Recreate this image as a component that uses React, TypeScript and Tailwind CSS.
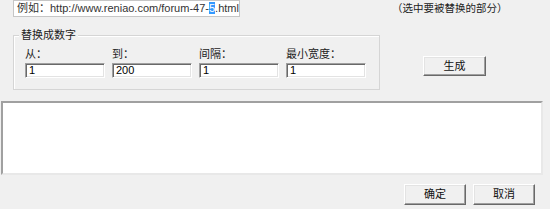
import React from 'react';

const font = "font-['Liberation_Sans','Noto_Sans_CJK_SC',sans-serif]";

const sunken =
  'border border-t-[#a0a0a0] border-l-[#a0a0a0] border-r-white border-b-white shadow-[inset_1px_1px_0_#696969,inset_-1px_-1px_0_#e3e3e3] bg-white';

const raised =
  'border border-t-white border-l-white border-r-[#696969] border-b-[#696969] shadow-[inset_-1px_-1px_0_#a0a0a0,inset_1px_1px_0_#e3e3e3] bg-[#f0f0f0]';

function Field({ label, value }: { label: string; value: string }) {
  return (
    <div className="flex flex-col w-[80px]">
      <span className="text-[11px] leading-[14px] text-[#222] h-[15px]">{label}</span>
      <div className={`${sunken} h-[15px] mt-[1px] pl-[3px] text-[11px] leading-[13px] text-black`}>
        {value}
      </div>
    </div>
  );
}

function Button({ label, className }: { label: string; className: string }) {
  return (
    <div
      className={`${raised} ${className} flex items-center justify-center text-[11px] text-[#111]`}
    >
      {label}
    </div>
  );
}

export default function App() {
  return (
    <div className={`w-[550px] h-[209px] bg-[#f0f0f0] ${font} overflow-hidden`}>
      {/* 示例地址 */}
      <div className="flex items-center h-[17px] pl-[13px]">
        <div className="w-[227px] h-[17px] border border-[#c6c6c6] bg-white pl-[3px] text-[11px] leading-[15px] text-[#333] whitespace-nowrap overflow-hidden">
          例如：http://www.reniao.com/forum-47-
          <span className="bg-[#3399ff] text-white">5</span>.html
        </div>
        <span className="ml-[152px] text-[10.5px] text-[#222]">（选中要被替换的部分）</span>
      </div>

      {/* 替换成数字 */}
      <div className="flex items-start mt-[18px]">
        <div className="relative ml-[13px] w-[367px] h-[55px] border border-[#d5d5d5] shadow-[inset_1px_1px_0_#fff]">
          <span className="absolute -top-[8px] left-[5px] px-[2px] bg-[#f0f0f0] text-[11px] leading-[14px] text-[#222]">
            替换成数字
          </span>
          <div className="flex gap-[7px] pl-[11px] pt-[11px]">
            <Field label="从：" value="1" />
            <Field label="到：" value="200" />
            <Field label="间隔：" value="1" />
            <Field label="最小宽度：" value="1" />
          </div>
        </div>
        <Button label="生成" className="ml-[43px] mt-[21px] w-[63px] h-[20px]" />
      </div>

      {/* 结果 */}
      <div className="ml-[1px] mt-[11px] w-[542px] h-[74px] border-2 border-t-[#a0a0a0] border-l-[#a0a0a0] border-r-[#e8e8e8] border-b-[#e8e8e8] bg-white" />

      <div className="flex pl-[404px] mt-[9px] gap-[7px]">
        <Button label="确定" className="w-[62px] h-[21px]" />
        <Button label="取消" className="w-[62px] h-[21px]" />
      </div>
    </div>
  );
}
